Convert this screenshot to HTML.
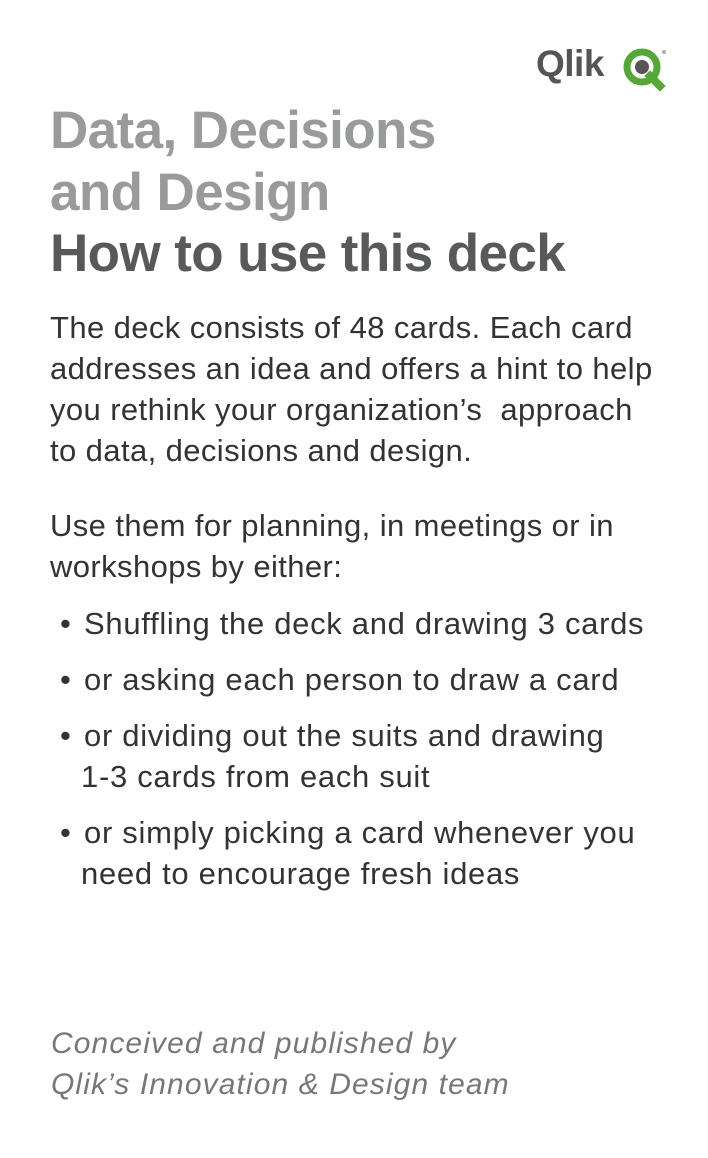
<!DOCTYPE html>
<html><head><meta charset="utf-8"><style>
html,body{margin:0;padding:0;background:#fff;}
body{width:708px;height:1158px;position:relative;overflow:hidden;font-family:"Liberation Sans",sans-serif;}
.l{position:absolute;white-space:nowrap;line-height:1;}
.t{font-size:53px;font-weight:bold;letter-spacing:-0.6px;left:50px;}
.b{font-size:31px;color:#333;left:50px;letter-spacing:0.4px;}
.u{letter-spacing:0.7px;}
.f{font-size:30px;color:#777;font-style:italic;left:51px;letter-spacing:1.1px;}
</style></head><body>
<div class="l" style="left:536px;top:45px;font-size:37px;font-weight:bold;color:#555;letter-spacing:-0.5px">Qlik</div>
<svg style="position:absolute;left:620px;top:46px" width="50" height="46" viewBox="0 0 50 46">
<circle cx="22" cy="21" r="15" fill="none" stroke="#54a934" stroke-width="7"/>
<circle cx="22" cy="21" r="7" fill="#555"/>
<path d="M30 30 L40 40" stroke="#54a934" stroke-width="8" stroke-linecap="square"/>
<circle cx="44" cy="6" r="2" fill="#aaa"/>
</svg>
<div class="l t" style="top:104px;color:#999a9c">Data, Decisions</div>
<div class="l t" style="top:166px;color:#999a9c">and Design</div>
<div class="l t" style="top:227px;color:#58595b">How to use this deck</div>
<div class="l b" style="top:312px">The deck consists of 48 cards. Each card</div>
<div class="l b" style="top:353px">addresses an idea and offers a hint to help</div>
<div class="l b" style="top:394px">you rethink your organization’s&nbsp; approach</div>
<div class="l b" style="top:435px">to data, decisions and design.</div>
<div class="l b" style="top:510px">Use them for planning, in meetings or in</div>
<div class="l b" style="top:551px">workshops by either:</div>
<div class="l b" style="top:608px;left:60px">•</div><div class="l b u" style="top:608px;left:84px">Shuffling the deck and drawing 3 cards</div>
<div class="l b" style="top:664px;left:60px">•</div><div class="l b u" style="top:664px;left:84px">or asking each person to draw a card</div>
<div class="l b" style="top:720px;left:60px">•</div><div class="l b u" style="top:720px;left:84px">or dividing out the suits and drawing</div>
<div class="l b u" style="top:761px;left:81px">1-3 cards from each suit</div>
<div class="l b" style="top:817px;left:60px">•</div><div class="l b u" style="top:817px;left:84px">or simply picking a card whenever you</div>
<div class="l b u" style="top:858px;left:81px">need to encourage fresh ideas</div>
<div class="l f" style="top:1029px">Conceived and published by</div>
<div class="l f" style="top:1070px">Qlik’s Innovation &amp; Design team</div>
</body></html>
